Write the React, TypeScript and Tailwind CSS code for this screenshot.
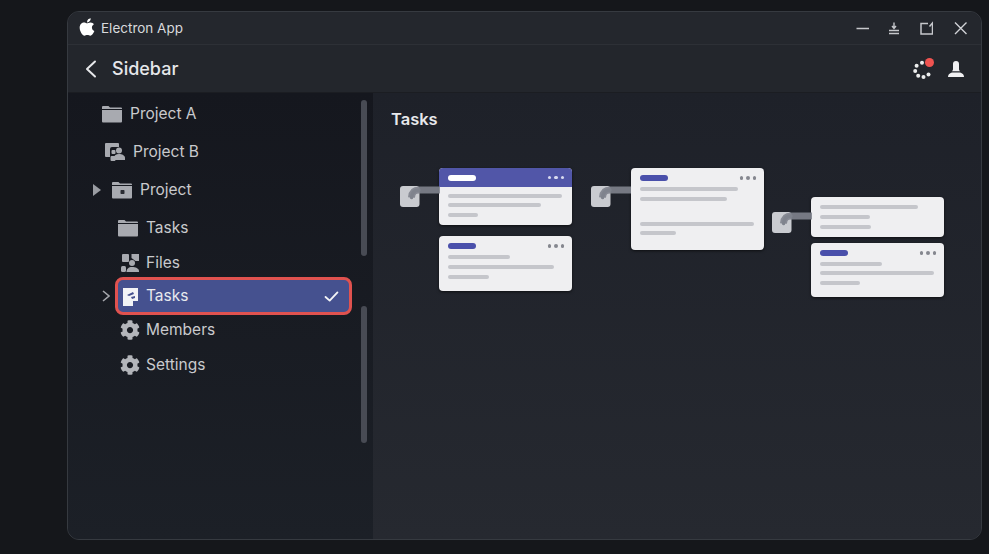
import { FaApple, FaCog } from 'react-icons/fa'

const uiFont = { fontFamily: 'Inter, "Liberation Sans", sans-serif' }

function FolderIcon({ className, glyph }: { className: string; glyph?: boolean }) {
  return (
    <svg viewBox="0 0 20 18" className={className} fill="#a8aab0">
      <path d="M0 2a1 1 0 0 1 1-1h5.500l1.500 1.600h11a1 1 0 0 1 1 1V4H0z" />
      <path d="M0 5h20v11.500a1 1 0 0 1-1 1H1a1 1 0 0 1-1-1z" />
      {glyph && <rect x="8.500" y="9" width="4" height="4" rx="0.800" fill="#2a2c33" />}
    </svg>
  )
}

function TeamIcon() {
  return (
    <svg viewBox="0 0 21 20" className="h-[20px] w-[21px]" fill="#a8aab0">
      <path d="M1 1h12a1 1 0 0 1 1 1v3H7a2 2 0 0 0-2 2v8H1a1 1 0 0 1-1-1V2a1 1 0 0 1 1-1z" />
      <circle cx="14" cy="8.500" r="3" />
      <path d="M9 16c0-2.500 2-4 5-4s6 1.500 6 4v2H9z" />
      <rect x="5.500" y="14" width="5" height="5" rx="1" />
      <rect x="6.500" y="8" width="4" height="4" rx="1" />
    </svg>
  )
}

function FilesIcon() {
  return (
    <svg viewBox="0 0 18 18" className="h-[18px] w-[18px]" fill="#a8aab0">
      <rect x="1" y="0" width="7" height="8" rx="1" />
      <path d="M10.500 0H18v7h-3.500l-4-3z" />
      <circle cx="11" cy="9" r="3" />
      <path d="M5.500 18c0-3 2-5 5.500-5s7 1.500 7 4v1z" />
      <rect x="0" y="12" width="5" height="6" rx="1.500" />
    </svg>
  )
}

function TaskDocIcon() {
  return (
    <svg viewBox="0 0 17 19" className="h-[19px] w-[17px]">
      <path d="M1 1h15v13h-5v5H1z" fill="#f2f3f6" />
      <path d="M5 8l6-3 1 2-5 2zM9 10l4-1v2l-3 1z" fill="#46518f" />
    </svg>
  )
}

type Line = { cls: string }
type CardData = {
  cls: string
  header?: boolean
  pill?: boolean
  lines: Line[]
}

function Card({ cls, header, pill = true, lines }: CardData) {
  return (
    <div className={`overflow-hidden rounded-[4px] bg-[#efeff1] shadow-[0_1px_3px_rgba(0,0,0,0.6)] ${cls}`}>
      {pill && (
        <div className={`flex items-center justify-between pl-[9px] pr-[8px] ${header ? 'h-[19px] bg-[#5156a8]' : 'pt-[7px]'}`}>
          <div className={`h-[6px] w-[28px] rounded-full ${header ? 'bg-white' : 'bg-[#4a50ab]'}`} />
          <div className="flex gap-[3px]">
            <div className={`size-[3.500px] rounded-full ${header ? 'bg-[#d8daf0]' : 'bg-[#85878f]'}`} />
            <div className={`size-[3.500px] rounded-full ${header ? 'bg-[#d8daf0]' : 'bg-[#85878f]'}`} />
            <div className={`size-[3.500px] rounded-full ${header ? 'bg-[#d8daf0]' : 'bg-[#85878f]'}`} />
          </div>
        </div>
      )}
      <div className="pl-[9px]">
        {lines.map((l, i) => (
          <div key={i} className={`h-[4px] rounded-full bg-[#c5c6cb] ${l.cls}`} />
        ))}
      </div>
    </div>
  )
}

function Connector() {
  return (
    <svg viewBox="0 0 40 22" className="absolute left-0 top-0 z-10 h-[22px] w-[40px]">
      <rect x="0" y="1" width="19.500" height="21" rx="3" fill="#c9cbd0" />
      <path d="M11.500 12.500C12 7 14 5 19 5H40" fill="none" stroke="#7f838d" strokeWidth="7" strokeOpacity="0.9" />
      <path d="M11.500 12.500C12 7.500 14 5 19 5" fill="none" stroke="#7f838d" strokeWidth="3.500" strokeLinecap="round" />
    </svg>
  )
}

export default function App() {
  return (
    <div className="h-[554px] w-[989px] overflow-hidden bg-[#15171b] pl-[67px] pt-[11px]" style={uiFont}>
      <div className="flex h-[529px] w-[915px] flex-col overflow-hidden rounded-[12px] border border-[#363a40] bg-[#20232b]">
        {/* title bar */}
        <div className="flex h-[33px] items-center justify-between border-b border-[#2d3036] bg-[#24272d] pl-[9px] pr-[14px]">
          <div className="flex items-center gap-[4px]">
            <FaApple className="size-[20px] -translate-y-[1px] text-white" />
            <span className="text-[13.500px] text-[#d8d9dc]">Electron App</span>
          </div>
          <div className="flex items-center">
            <svg viewBox="0 0 14 14" className="size-[14px]" fill="none" stroke="#c6c8cc" strokeWidth="1.400">
              <path d="M1.500 7.500h12.500" />
            </svg>
            <svg viewBox="0 0 14 14" className="ml-[18px] size-[14px]" fill="none" stroke="#c6c8cc" strokeWidth="1.400">
              <path d="M7 1.500v5M5 5l2 2.500L9 5M2 9.500h10M2 12.500h10" />
            </svg>
            <svg viewBox="0 0 14 14" className="ml-[18px] size-[14px]" fill="none" stroke="#c6c8cc" strokeWidth="1.500">
              <path d="M9 2.500H2v10.500h11.500V2L10.500 5.500" />
            </svg>
            <svg viewBox="0 0 14 14" className="ml-[20px] size-[14px]" fill="none" stroke="#d0d2d6" strokeWidth="1.400">
              <path d="M2 1.500l11.500 11.500M13.500 1.500L2 13" />
            </svg>
          </div>
        </div>

        {/* header */}
        <div className="flex h-[48px] items-center justify-between border-b border-[#1b1d22] bg-[#23262c] pl-[17px] pr-[16px]">
          <div className="flex items-center">
            <svg viewBox="0 0 12 18" className="h-[18px] w-[12px]" fill="none" stroke="#e6e7ea" strokeWidth="2" strokeLinecap="round" strokeLinejoin="round">
              <path d="M10 1.500L2 9l8 7.500" />
            </svg>
            <span className="ml-[15px] text-[18px] font-medium text-[#e6e7ea]">Sidebar</span>
          </div>
          <div className="flex items-center gap-[14px]">
            <div className="relative size-[20px]">
              <svg viewBox="0 0 20 20" className="size-[20px]" fill="#eceded">
                <circle cx="9" cy="3.800" r="2" />
                <circle cx="3.600" cy="6.800" r="2" />
                <circle cx="2.200" cy="12" r="2" />
                <circle cx="5.200" cy="16.800" r="2" />
                <circle cx="10.500" cy="18" r="2" />
                <circle cx="15.500" cy="15.500" r="2" />
              </svg>
              <div className="absolute -right-[1px] -top-[1px] size-[9px] rounded-full bg-[#ef5350]" />
            </div>
            <svg viewBox="0 0 18 18" className="size-[18px]" fill="#f0f0f2">
              <path d="M6 4a3 3 0 0 1 6 0v5c0 1 .5 1.800 1 2.300H5c.5-.5 1-1.300 1-2.300z" />
              <path d="M1 17c0-3 2.500-4.500 5-4.500h6c2.500 0 5 1.500 5 4.500z" />
            </svg>
          </div>
        </div>

        <div className="flex min-h-0 flex-1">
          {/* sidebar */}
          <div className="flex w-[305px] bg-gradient-to-b from-[#15171e] to-[#1c2027]">
            <div className="w-[293px] pt-[2px] text-[15.500px] text-[#c9cacd]">
              <div className="flex h-[38px] items-center pl-[34px]">
                <FolderIcon className="h-[18px] w-[20px]" />
                <span className="ml-[8px]">Project A</span>
              </div>
              <div className="flex h-[38px] items-center pl-[37px]">
                <TeamIcon />
                <span className="ml-[7px]">Project B</span>
              </div>
              <div className="flex h-[38px] items-center pl-[25px]">
                <svg viewBox="0 0 8 12" className="h-[12px] w-[8px]" fill="#9a9ca2">
                  <path d="M0 0l8 6-8 6z" />
                </svg>
                <FolderIcon glyph className="ml-[11px] h-[18px] w-[20px]" />
                <span className="ml-[8px]">Project</span>
              </div>
              <div className="flex h-[38px] items-center pl-[50px]">
                <FolderIcon className="h-[18px] w-[20px]" />
                <span className="ml-[8px]">Tasks</span>
              </div>
              <div className="flex h-[30px] items-center pl-[53px] pt-[2px]">
                <FilesIcon />
                <span className="ml-[7px]">Files</span>
              </div>
              <div className="flex h-[38px] items-center pl-[34px]">
                <svg viewBox="0 0 8 12" className="h-[12px] w-[8px]" fill="none" stroke="#a5a7ac" strokeWidth="1.600">
                  <path d="M1 1l6 5-6 5" />
                </svg>
                <div className="ml-[5px] flex h-[38px] w-[237px] items-center justify-between rounded-[8px] border-[3px] border-[#e0524f] bg-[#45518f] pl-[4px] pr-[10px]">
                  <div className="flex items-center">
                    <TaskDocIcon />
                    <span className="ml-[7px] text-[#e8e9ee]">Tasks</span>
                  </div>
                  <svg viewBox="0 0 16 12" className="h-[11px] w-[15px]" fill="none" stroke="#f4f5f7" strokeWidth="2" strokeLinecap="round" strokeLinejoin="round">
                    <path d="M1.500 6.500L6 10.500l8.500-9" />
                  </svg>
                </div>
              </div>
              <div className="flex h-[30px] items-center pl-[52px]">
                <FaCog className="size-[20px] text-[#b3b5ba]" />
                <span className="ml-[6px]">Members</span>
              </div>
              <div className="flex h-[40px] items-center pl-[52px]">
                <FaCog className="size-[20px] text-[#b3b5ba]" />
                <span className="ml-[6px]">Settings</span>
              </div>
            </div>
            <div className="flex w-[6px] flex-col pt-[7px]">
              <div className="h-[156px] w-[6px] rounded-full bg-[#484b54]" />
              <div className="mt-[50px] h-[137px] w-[6px] rounded-full bg-[#484b54]" />
            </div>
          </div>

          {/* main */}
          <div className="flex-1 bg-gradient-to-b from-[#1e2129] to-[#262930] pl-[18px] pt-[16px]">
            <h1 className="text-[16.500px] font-semibold leading-[20px] text-[#e8e9ec]">Tasks</h1>
            <div className="ml-[9px] mt-[39px] flex">
              <div className="relative w-[172px] pl-[39px]">
                <Card
                  cls="h-[57px] w-[133px]"
                  header
                  lines={[
                    { cls: 'mt-[7px] w-[114px]' },
                    { cls: 'mt-[5px] w-[93px]' },
                    { cls: 'mt-[6px] w-[30px]' },
                  ]}
                />
                <Card
                  cls="mt-[11px] h-[55px] w-[133px]"
                  lines={[
                    { cls: 'mt-[6px] w-[62px]' },
                    { cls: 'mt-[6px] w-[106px]' },
                    { cls: 'mt-[6px] w-[41px]' },
                  ]}
                />
                <div className="absolute left-0 top-[17px] h-[22px] w-[40px]">
                  <Connector />
                </div>
              </div>
              <div className="relative ml-[19px] w-[173px] pl-[40px]">
                <Card
                  cls="h-[82px] w-[133px]"
                  lines={[
                    { cls: 'mt-[6px] w-[98px]' },
                    { cls: 'mt-[6px] w-[87px]' },
                    { cls: 'mt-[21px] w-[114px]' },
                    { cls: 'mt-[5px] w-[36px]' },
                  ]}
                />
                <div className="absolute left-0 top-[17px] h-[22px] w-[40px]">
                  <Connector />
                </div>
              </div>
              <div className="relative ml-[8px] w-[172px] pl-[39px] pt-[29px]">
                <Card
                  pill={false}
                  cls="h-[40px] w-[133px] pt-[6px]"
                  lines={[
                    { cls: 'mt-[2px] w-[98px]' },
                    { cls: 'mt-[6px] w-[50px]' },
                    { cls: 'mt-[6px] w-[51px]' },
                  ]}
                />
                <Card
                  cls="mt-[6px] h-[54px] w-[133px]"
                  lines={[
                    { cls: 'mt-[6px] w-[62px]' },
                    { cls: 'mt-[5px] w-[114px]' },
                    { cls: 'mt-[6px] w-[40px]' },
                  ]}
                />
                <div className="absolute left-0 top-[43px] h-[22px] w-[40px]">
                  <Connector />
                </div>
              </div>
            </div>
          </div>
        </div>
      </div>
    </div>
  )
}
